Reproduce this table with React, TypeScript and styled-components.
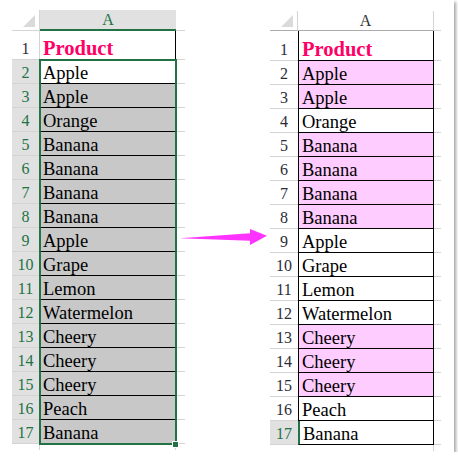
import React from 'react';
import styled, { createGlobalStyle } from 'styled-components';

const GREEN = '#217346';
const GRID = '#d4d4d4';
const HEADLINE = '#ababab';
const SEL_BG = '#e1e1e1';
const SERIF = `"Liberation Serif", "Times New Roman", "DejaVu Serif", serif`;

const Global = createGlobalStyle`
  html, body { margin: 0; padding: 0; background: #fff; }
  body { font-family: ${SERIF}; }
  * { box-sizing: border-box; }
`;

const Frame = styled.div`
  width: 454px;
  height: 452px;
  padding: 10px 0 0 12px;
  display: flex;
  align-items: flex-start;
  background: #fff;
  font-family: ${SERIF};
  box-shadow: 2px 2px 3px rgba(0, 0, 0, 0.35);
`;

const Sheet = styled.div<{ $top: number }>`
  display: flex;
  margin-top: ${(p) => p.$top}px;
`;

const Column = styled.div<{ $w: number }>`
  display: flex;
  flex-direction: column;
  width: ${(p) => p.$w}px;
`;

const Corner = styled.div<{ $h: number; $line: string }>`
  height: ${(p) => p.$h}px;
  display: flex;
  align-items: flex-end;
  justify-content: flex-end;
  padding: 0 4px 3px 0;
  border-right: 1px solid ${GRID};
  border-bottom: 1px solid ${(p) => p.$line};
`;

const Triangle = styled.div`
  width: 12px;
  height: 12px;
  background: #dadada;
  clip-path: polygon(100% 0, 100% 100%, 0 100%);
`;

const ColHead = styled.div<{ $h: number; $sel?: boolean }>`
  height: ${(p) => p.$h}px;
  display: flex;
  align-items: center;
  justify-content: center;
  font-family: ${SERIF};
  font-size: 16px;
  line-height: 18px;
  padding-top: 1px;
  color: ${(p) => (p.$sel ? GREEN : '#333')};
  background: ${(p) => (p.$sel ? SEL_BG : '#fff')};
  border-bottom: ${(p) => (p.$sel ? `2px solid ${GREEN}` : `1px solid ${HEADLINE}`)};
  border-right: ${(p) => (p.$sel ? 'none' : `1px solid ${GRID}`)};
`;

const RowHead = styled.div<{ $h: number; $sel?: boolean; $edge?: boolean }>`
  height: ${(p) => p.$h}px;
  display: flex;
  align-items: flex-end;
  justify-content: center;
  font-family: ${SERIF};
  font-size: 16px;
  line-height: 20px;
  color: ${(p) => (p.$sel ? GREEN : '#2d2d3a')};
  background: ${(p) => (p.$sel ? SEL_BG : '#fff')};
  border-bottom: 1px solid ${GRID};
  border-right: ${(p) => (p.$edge ? `1px solid ${GRID}` : 'none')};
`;

const Cell = styled.div<{
  $h: number;
  $bg: string;
  $left?: string;
  $title?: boolean;
}>`
  height: ${(p) => p.$h}px;
  display: flex;
  align-items: flex-end;
  padding: 0 0 ${(p) => (p.$title ? 1 : 0)}px 3px;
  background: ${(p) => p.$bg};
  border-right: 1px solid #000;
  border-bottom: 1px solid #000;
  border-left: ${(p) => p.$left ?? 'none'};
  font-family: ${SERIF};
  font-size: ${(p) => (p.$title ? '20.5px' : '18.5px')};
  font-weight: ${(p) => (p.$title ? 700 : 400)};
  line-height: 20px;
  color: ${(p) => (p.$title ? '#ff0066' : '#000')};
  white-space: nowrap;
`;

const Selection = styled.div`
  position: relative;
  display: flex;
  flex-direction: column;
  outline: 2px solid ${GREEN};
  outline-offset: -1px;
  z-index: 1;
`;

const FillHandle = styled.div`
  position: absolute;
  right: -3px;
  bottom: -4px;
  width: 7px;
  height: 7px;
  background: ${GREEN};
  border: 1px solid #fff;
`;

const ExtCell = styled.div<{ $h: number }>`
  height: ${(p) => p.$h}px;
  border-bottom: 1px solid ${GRID};
`;

const Tail = styled.div<{ $line?: boolean }>`
  height: 6px;
  border-right: ${(p) => (p.$line ? `1px solid ${GRID}` : 'none')};
`;

const ArrowSlot = styled.div`
  width: 85px;
  padding-top: 216px;
`;

const ArrowSvg = styled.svg`
  display: block;
  margin-left: -6px;
`;

const products = [
  'Apple', 'Apple', 'Orange', 'Banana', 'Banana', 'Banana', 'Banana', 'Apple',
  'Grape', 'Lemon', 'Watermelon', 'Cheery', 'Cheery', 'Cheery', 'Peach', 'Banana',
];

const dupes = new Set([2, 3, 5, 6, 7, 8, 13, 14, 15]);

const LeftSheet = () => (
  <Sheet $top={0}>
    <Column $w={28}>
      <Corner $h={21} $line={GRID}>
        <Triangle />
      </Corner>
      <RowHead $h={29} $edge>1</RowHead>
      {products.map((_, i) => (
        <RowHead key={i} $h={24} $sel $edge>
          {i + 2}
        </RowHead>
      ))}
      <Tail $line />
    </Column>
    <Column $w={136}>
      <ColHead $h={21} $sel>
        A
      </ColHead>
      <Cell $h={29} $bg="#fff" $title>
        Product
      </Cell>
      <Selection>
        {products.map((p, i) => (
          <Cell key={i} $h={24} $bg={i === 0 ? '#fff' : '#c8c8c8'}>
            {p}
          </Cell>
        ))}
        <FillHandle />
      </Selection>
      <Tail $line />
    </Column>
    <Column $w={9}>
      <ExtCell $h={21} />
      <ExtCell $h={29} />
      {products.map((_, i) => (
        <ExtCell key={i} $h={24} />
      ))}
    </Column>
  </Sheet>
);

const RightSheet = () => (
  <Sheet $top={1}>
    <Column $w={28}>
      <Corner $h={20} $line={HEADLINE}>
        <Triangle />
      </Corner>
      <RowHead $h={30}>1</RowHead>
      {products.map((_, i) => (
        <RowHead key={i} $h={24} $sel={i === 15}>
          {i + 2}
        </RowHead>
      ))}
      <Tail />
    </Column>
    <Column $w={136}>
      <ColHead $h={20}>A</ColHead>
      <Cell $h={30} $bg="#fff" $title $left="1px solid #000">
        Product
      </Cell>
      {products.map((p, i) => (
        <Cell
          key={i}
          $h={24}
          $bg={dupes.has(i + 2) ? '#ffccff' : '#fff'}
          $left={i === 15 ? `2px solid ${GREEN}` : '1px solid #000'}
        >
          {p}
        </Cell>
      ))}
      <Tail $line />
    </Column>
    <Column $w={7}>
      <ExtCell $h={20} />
      <ExtCell $h={30} />
      {products.map((_, i) => (
        <ExtCell key={i} $h={24} />
      ))}
    </Column>
  </Sheet>
);

const Arrow = () => (
  <ArrowSlot>
    <ArrowSvg width="90" height="22" viewBox="0 0 90 22">
      <polygon
        points="1,12.3 71,7.3 71,3 88,9.8 71,19 71,14.8"
        fill="#ff33ff"
      />
    </ArrowSvg>
  </ArrowSlot>
);

export default function App() {
  return (
    <>
      <Global />
      <Frame>
        <LeftSheet />
        <Arrow />
        <RightSheet />
      </Frame>
    </>
  );
}
